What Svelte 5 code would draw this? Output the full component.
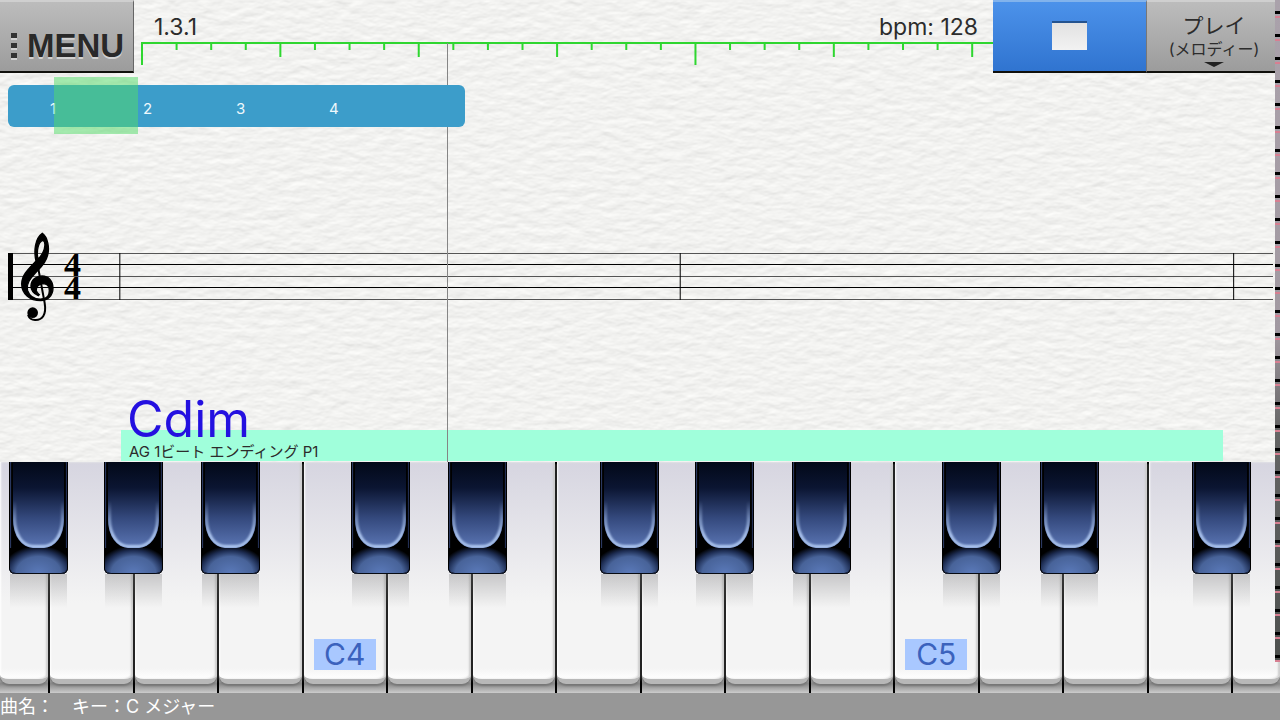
<script>
  // Song state
  let position = '1.3.1';
  let bpm = 128;
  let beats = [1, 2, 3, 4];
  let chord = { name: 'Cdim', pattern: 'AG 1ビート エンディング P1' };
  let playing = true;

  // Ruler: 4 ticks per beat, 16 per bar
  const ticks = Array.from({ length: 25 }, (_, i) => ({
    x: i * 4.06,
    length: i % 16 === 0 ? 22 : i % 4 === 0 ? 14 : 7
  }));

  const staffLines = [23, 34, 46, 57, 69];
  const barLines = [8.8, 53.1, 96.85];

  const whiteKeys = [
    'F3', 'G3', 'A3', 'B3', 'C4', 'D4', 'E4', 'F4',
    'G4', 'A4', 'B4', 'C5', 'D5', 'E5', 'F5', 'G5'
  ];

  // Offsets in percent of the keyboard width
  const blackKeys = [
    { note: 'F#3', x: 0.7 },
    { note: 'G#3', x: 8.1 },
    { note: 'A#3', x: 15.7 },
    { note: 'C#4', x: 27.4 },
    { note: 'D#4', x: 35 },
    { note: 'F#4', x: 46.85 },
    { note: 'G#4', x: 54.3 },
    { note: 'A#4', x: 61.85 },
    { note: 'C#5', x: 73.6 },
    { note: 'D#5', x: 81.25 },
    { note: 'F#5', x: 93.1 }
  ];

  function togglePlay() {
    playing = !playing;
  }
</script>

<main class="app">
  <div class="sheet">
    <svg class="paper" aria-hidden="true">
      <filter id="paper-grain" x="0" y="0" width="100%" height="100%" color-interpolation-filters="sRGB">
        <feTurbulence type="fractalNoise" baseFrequency="0.06 0.13" numOctaves="3" seed="4" />
        <feDiffuseLighting lighting-color="#fdfdfb" surfaceScale="0.4" diffuseConstant="1.03">
          <feDistantLight azimuth="260" elevation="68" />
        </feDiffuseLighting>
      </filter>
      <rect width="100%" height="100%" filter="url(#paper-grain)" />
    </svg>
    <div class="playhead"></div>

    <header class="toolbar">
      <button class="tool menu">
        <span class="dots"><i></i><i></i><i></i></span>MENU
      </button>
      <div class="timeline">
        <div class="readout">
          <span>{position}</span>
          <span>bpm: {bpm}</span>
        </div>
        <svg class="ruler" aria-hidden="true">
          <rect width="100%" height="2" />
          {#each ticks as tick}
            <rect x="{tick.x}%" width="2" height={tick.length + 1} />
          {/each}
        </svg>
      </div>
      <button class="tool stop" aria-label="Stop" on:click={togglePlay}>
        <span class="stop-icon"></span>
      </button>
      <button class="tool mode">
        <span class="mode-name">プレイ</span>
        <span class="mode-part">(メロディー)</span>
        <span class="caret"></span>
      </button>
    </header>

    <section class="overview">
      <div class="pattern">
        {#each beats as beat}
          <span>{beat}</span>
        {/each}
      </div>
      <div class="window"></div>
    </section>

    <section class="staff">
      <svg class="staff-lines" role="img" aria-label="Treble staff">
        {#each staffLines as y, i}
          <rect {y} width="100%" height="1" class:soft={i % 2 === 0} />
        {/each}
        <rect y="23" width="5" height="47" />
        {#each barLines as x}
          <rect x="{x}%" y="23" width="1" height="47" />
        {/each}
        <svg x="12" y="2" width="36" height="92" viewBox="60 35 108 276">
          <path
            class="clef"
            fill-rule="evenodd"
            d="M127 39 C143 50 149 82 143 104 C137 130 119 144 106 158 C91 174 78 190 83 211 C90 231 109 237 125 236 C142 235 148 224 148 211 C148 198 140 190 129 190 C116 191 108 200 109 211 C110 217 114 220 118 223 L115 226 C100 219 92 208 93 195 C94 178 109 167 126 167 C146 167 159 183 159 203 C159 225 144 241 122 241 C89 241 65 220 65 191 C65 164 85 146 108 122 C101 93 105 54 127 39 Z M114 116 C109 94 114 64 129 60 C138 64 135 84 129 96 C125 104 120 111 114 116 Z"
          />
          <path class="stem" d="M110 118 L134 248 C140 283 127 300 105 299 C95 299 87 292 84 284" />
          <circle cx="98" cy="277" r="16" />
        </svg>
        <text x="56" y="46">4</text>
        <text x="56" y="69">4</text>
      </svg>
    </section>

    <section class="chord">
      <div class="chord-name">{chord.name}</div>
      <div class="chord-pattern">{chord.pattern}</div>
    </section>
  </div>

  <section class="keyboard">
    {#each whiteKeys as note}
      <button class="white" aria-label={note}>
        <span class="face">
          {#if note.startsWith('C')}
            <span class="note">{note}</span>
          {/if}
        </span>
      </button>
    {/each}
    {#each blackKeys as key}
      <button class="black" aria-label={key.note} style="left: {key.x}%">
        <span class="top"></span>
        <span class="front"></span>
      </button>
    {/each}
  </section>

  <footer>曲名：　キー：C メジャー</footer>
  <div class="edge"></div>
</main>

<style>
  :global(body) {
    font-family: Inter, "Noto Sans CJK JP", sans-serif;
    color: #2c2c2c;
    background: #f1f1ee;
  }

  .app {
    position: relative;
    display: flex;
    flex-direction: column;
    min-height: 100vh;
    overflow: hidden;
  }

  button {
    margin: 0;
    padding: 0;
    border: 0;
    font-family: inherit;
    color: inherit;
    cursor: pointer;
  }

  .sheet {
    position: relative;
    flex: 1;
    display: flex;
    flex-direction: column;
    padding-bottom: 1px;
  }

  .paper {
    position: absolute;
    inset: 0;
    width: 100%;
    height: 100%;
  }

  .playhead {
    position: absolute;
    z-index: 1;
    left: 34.9%;
    top: 43px;
    bottom: 0;
    width: 1px;
    background: #858585;
  }

  /* Toolbar */
  .toolbar {
    position: relative;
    display: flex;
    height: 73px;
    padding-right: 5px;
  }

  .tool {
    box-sizing: border-box;
    border-top: 2px solid #cfcfcf;
    border-bottom: 2px solid #10100c;
    background: linear-gradient(#bcbcbc, #9c9c9c);
  }

  .menu {
    display: flex;
    align-items: center;
    gap: 10px;
    width: 134px;
    padding: 18px 0 0 11px;
    border-right: 1px solid #666;
    font: bold 33px/36px "Liberation Sans", Arial, sans-serif;
    color: #292929;
    text-shadow: 0 2px 0 #d2d2d2;
  }

  .dots {
    display: grid;
    gap: 5px;
  }

  .dots i {
    width: 6px;
    height: 5px;
    background: #333;
    box-shadow: 0 2px 0 #d2d2d2;
  }

  .timeline {
    flex: 1;
    padding: 12px 0 0 7px;
  }

  .readout {
    display: flex;
    justify-content: space-between;
    padding: 0 15px 0 13px;
    font-size: 23px;
    line-height: 30px;
  }

  .ruler {
    display: block;
    width: 100%;
    height: 24px;
    fill: #2fd630;
  }

  .stop {
    display: flex;
    justify-content: center;
    width: 154px;
    padding-top: 19px;
    border-top-color: #82b3ec;
    border-right: 1px solid #777;
    background: linear-gradient(#4c92ea, #3074d0);
  }

  .stop-icon {
    width: 35px;
    height: 27px;
    border-top: 2px solid #24538f;
    background: linear-gradient(#e2e2e2, #f2f2f2);
  }

  .mode {
    display: flex;
    flex-direction: column;
    align-items: center;
    width: 128px;
    padding-top: 11px;
    padding-left: 6px;
  }

  .mode-name {
    font-size: 21px;
    line-height: 26px;
  }

  .mode-part {
    font-size: 16px;
    line-height: 20px;
  }

  .caret {
    margin-top: 3px;
    border: 10px solid transparent;
    border-top: 5px solid #222;
    border-bottom: 0;
  }

  /* Pattern overview */
  .overview {
    position: relative;
    z-index: 2;
    padding: 12px 8px 0;
  }

  .pattern {
    display: flex;
    box-sizing: border-box;
    width: 36.15%;
    height: 42px;
    padding-left: 42px;
    border-radius: 6px;
    background: #3c9dca;
    color: #eef8fc;
    font-size: 15px;
    line-height: 48px;
  }

  .pattern span {
    width: 93px;
  }

  .window {
    position: absolute;
    left: 54px;
    top: 4px;
    width: 84px;
    height: 57px;
    background: rgba(83, 220, 103, 0.51);
  }

  /* Staff */
  .staff {
    position: relative;
    flex: 1;
    display: flex;
    align-items: center;
    padding: 32px 7px 0 8px;
  }

  .staff-lines {
    width: 100%;
    height: 94px;
    fill: #000;
  }

  .staff-lines .soft {
    fill: #555;
  }

  .staff-lines text {
    font: bold 34px "Liberation Serif", serif;
  }

  .clef {
    stroke: #000;
    stroke-width: 4;
  }

  .stem {
    fill: none;
    stroke: #000;
    stroke-width: 6;
  }

  /* Chord lane */
  .chord {
    position: relative;
    margin: 0 57px 0 121px;
    padding-left: 6px;
    background: linear-gradient(#a0ffdb, #a0ffdb) bottom / 100% 31px no-repeat;
  }

  .chord-name {
    position: relative;
    z-index: 2;
    color: #2410e0;
    font-size: 50px;
    line-height: 48px;
  }

  .chord-pattern {
    padding-left: 2px;
    font-size: 15px;
    line-height: 18px;
  }

  /* Keyboard */
  .keyboard {
    position: relative;
    display: grid;
    grid-template-columns: 100fr repeat(14, 169fr) 94fr;
    height: 231px;
  }

  .white {
    display: flex;
    min-width: 0;
    padding-bottom: 9px;
    border-right: 2px solid #000;
    background: linear-gradient(#999 95%, #888 96%, #ccc);
  }

  .white:nth-child(16) {
    border-right: 0;
  }

  .face {
    flex: 1;
    display: flex;
    align-items: flex-end;
    justify-content: center;
    align-self: stretch;
    border-bottom: 5px solid #b8b8b8;
    border-radius: 0 0 9px 9px;
    background: linear-gradient(#d6d5e0, #f4f4f4 65%, #f4f4f4 95%, #fff);
    box-shadow: inset 1px 0 2px #fff, inset -2px 0 2px #ccc, 0 2px 2px #777;
  }

  .note {
    width: 62px;
    margin-bottom: 9px;
    background: #a9c8ff;
    color: #3b62bd;
    font-size: 30px;
    line-height: 31px;
    text-align: center;
  }

  .black {
    position: absolute;
    top: 0;
    display: flex;
    flex-direction: column;
    width: 59px;
    height: 112px;
    padding: 0 4px;
    border-radius: 0 0 6px 6px;
    background: #000;
    box-shadow: inset 1px 0 0 #000, inset 2px 0 1px #2f3f6b, inset -1px 0 0 #000, inset -2px 0 1px #26345c;
  }

  .black::after {
    content: "";
    position: absolute;
    left: 1px;
    right: 1px;
    top: 100%;
    height: 34px;
    background: linear-gradient(rgba(110, 110, 110, 0.3), rgba(150, 150, 150, 0));
  }

  .top {
    position: relative;
    height: 86px;
    border-radius: 0 0 20px 20px / 0 0 28px 28px;
    background: linear-gradient(#020818, #0b1532 30%, #34497d 65%, #5b76b4);
  }

  .top::after {
    content: "";
    position: absolute;
    inset: 0;
    border: 3px solid #b4cdf4;
    border-top: 0;
    border-radius: inherit;
    filter: blur(1px);
    mask-image: linear-gradient(transparent 45%, #000 85%);
  }

  .front {
    flex: 1;
    margin: 0 -3px 1px;
    border-radius: 0 0 6px 6px;
    background: radial-gradient(ellipse 65% 110% at 50% 100%, #5a79b9, #486399 60%, #1c2b50 82%, #000);
  }

  footer {
    height: 27px;
    background: #979797;
    color: #fff;
    font-size: 18px;
    line-height: 27px;
    white-space: pre;
  }

  /* Side strip of the track list */
  .edge {
    position: absolute;
    z-index: 3;
    right: 0;
    top: 0;
    width: 5px;
    height: 92%;
    background:
      repeating-linear-gradient(transparent 0 11px, #000 11px 14px, transparent 14px 16px, #d77f91 16px 18px, transparent 18px 23px),
      linear-gradient(#aaa2ab, #a199a1 50%, #656565 65%, #4d504e);
  }
</style>
